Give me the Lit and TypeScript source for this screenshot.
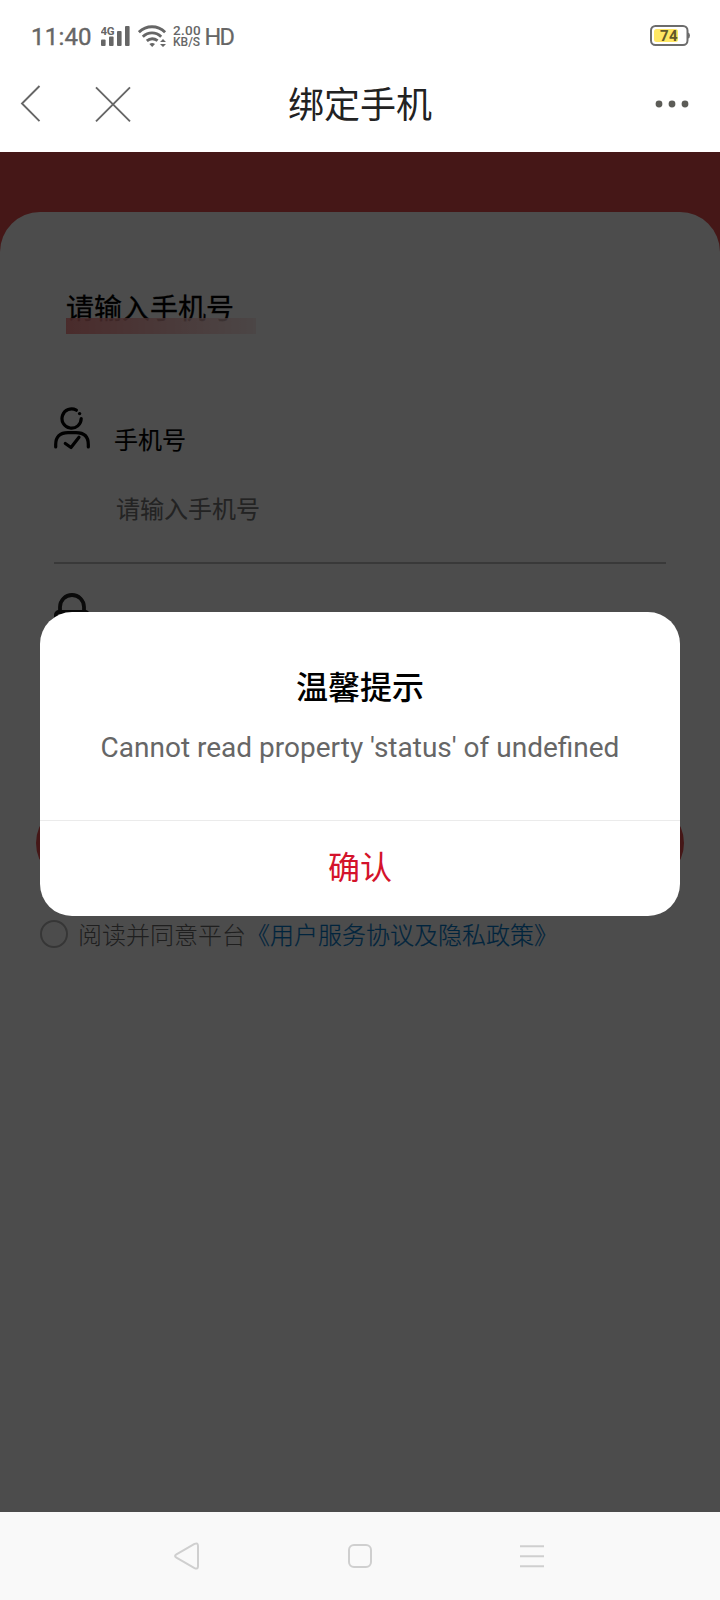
import { LitElement, html, css } from "lit";
import { customElement } from "lit/decorators.js";

@customElement("status-bar")
class StatusBar extends LitElement {
  static styles = css`
    :host { display: flex; box-sizing: border-box; height: 72px; padding: 0 30px 0 31px; align-items: center; color: #666; font-family: Roboto, "Noto Sans", sans-serif; }
    .time { width: 70px; font-size: 24px; line-height: 28px; font-weight: 400; -webkit-text-stroke: 0.4px #666; letter-spacing: 0.2px; white-space: nowrap; margin-top: 2px; }
    svg { display: block; flex: none; }
    .rate { width: 31.5px; font-size: 13.5px; line-height: 12px; font-weight: 500; white-space: nowrap; }
    .rate div { height: 12px; letter-spacing: 0.3px; }
    .rate .unit { font-size: 12px; letter-spacing: 0; }
    .hd { font-size: 23.5px; line-height: 28px; margin-top: 2px; letter-spacing: -1.8px; -webkit-text-stroke: 0.2px #666; }
    .battery { margin-left: auto; }
  `;
  render() {
    return html`
      <div class="time">11:40</div>
      <svg width="37" height="24" viewBox="0 0 37 24" fill="#666">
        <text x="-0.5" y="10.5" font-size="11.5" font-weight="700" letter-spacing="-0.3">4G</text>
        <rect x="0" y="15.5" width="4.6" height="6.5" rx="1" />
        <rect x="8" y="12.5" width="4.6" height="9.5" rx="1" />
        <rect x="16" y="7" width="4.6" height="15" rx="1" />
        <rect x="24" y="2" width="4.6" height="20" rx="1" />
      </svg>
      <svg width="35" height="24" viewBox="0 0 35 24" fill="none" stroke="#666" stroke-width="2.9">
        <path d="M.9 8.2C8.5 1 19.5 1 27.1 8.2" />
        <path d="M4.8 12.7C10.3 7.6 17.7 7.6 23.2 12.7" />
        <path d="M8.8 16.9C12 14.2 16.2 14.2 19.6 16.7" />
        <path d="M11.4 20Q14.2 18 17 20L14.2 23Z" fill="#666" stroke="none" />
        <path d="M22 18L25 15L28 18ZM22 20L25 23L28 20Z" fill="#666" stroke="none" />
      </svg>
      <div class="rate"><div>2.00</div><div class="unit">KB/S</div></div>
      <div class="hd">HD</div>
      <svg class="battery" width="40" height="22" viewBox="0 0 40 22">
        <rect x="1" y="1" width="36.5" height="19" rx="4.5" fill="#fff" stroke="#6c6c6c" stroke-width="2" />
        <path d="M38 7.5Q40 8 40 10.5T38 13.5Z" fill="#6c6c6c" />
        <rect x="4" y="4" width="24" height="13" rx="2.5" fill="#ffe763" />
        <text x="19" y="16" text-anchor="middle" font-size="15" font-weight="700" fill="#62592a" letter-spacing="0.4">74</text>
      </svg>
    `;
  }
}

@customElement("title-bar")
class TitleBar extends LitElement {
  static styles = css`
    :host { display: grid; grid-template-columns: 1fr auto 1fr; box-sizing: border-box; height: 80px; align-items: center; padding: 0 31px 16px 20px; }
    .left { display: flex; gap: 53.5px; align-items: center; }
    h1 { margin: -4px -5.5px 0 5.5px; font: 400 36px/44px "Noto Sans CJK SC", sans-serif; color: #222; }
    .more { justify-self: end; }
    svg { display: block; }
  `;
  render() {
    return html`
      <div class="left">
        <svg width="21" height="38" viewBox="0 0 21 38" fill="none" stroke="#666" stroke-width="1.9"><path d="M19.5 1L2 18.5L19.5 36.2" /></svg>
        <svg width="36" height="36" viewBox="0 0 36 36" fill="none" stroke="#666" stroke-width="1.9"><path d="M1 1.3L35 35.3M35 1.3L1 35.3" /></svg>
      </div>
      <h1>绑定手机</h1>
      <svg class="more" width="34" height="8" viewBox="0 0 34 8" fill="#5c5c57"><circle cx="4" cy="4" r="3.4" /><circle cx="17" cy="4" r="3.4" /><circle cx="30" cy="4" r="3.4" /></svg>
    `;
  }
}

@customElement("phone-form")
class PhoneForm extends LitElement {
  static styles = css`
    :host { display: block; box-sizing: border-box; height: 1300px; background: #fff; border-radius: 40px 40px 0 0; padding-top: 76px; font-family: "Noto Sans CJK SC", sans-serif; }
    .heading { width: 190px; height: 46px; margin-left: 66px; position: relative; font-size: 28px; line-height: 39px; color: #000; white-space: nowrap; -webkit-text-stroke: 0.3px #000; }
    .heading::after { content: ""; position: absolute; left: 0; bottom: 0; width: 190px; height: 16px; background: linear-gradient(90deg, rgba(245,128,128,.86), rgba(250,228,228,.78)); }
    .field { display: grid; grid-template-columns: 60px 1fr; margin: 73px 54px 0; height: 157px; border-bottom: 2px solid #bfbfbf; box-sizing: border-box; grid-template-rows: 68px 1fr; font-size: 24px; }
    .field svg { margin-top: 0; }
    .label { line-height: 36px; margin-top: 14px; color: #000; -webkit-text-stroke: 0.2px #000; }
    .placeholder { grid-column: 2; line-height: 36px; margin: 15px 0 0 2px; color: #757575; -webkit-text-stroke: 0.1px #757575; }
    .lock { display: block; margin: 29px 0 0 54px; }
    .submit { height: 80px; border-radius: 40px; margin: 166px 36px 0; background: #e64d4d; }
    .agree { display: flex; align-items: center; margin: 31px 0 0 40px; height: 40px; font-size: 24px; line-height: 36px; color: #686868; font-weight: 300; white-space: nowrap; }
    .radio { box-sizing: border-box; width: 28px; height: 28px; margin-right: 10px; border: 2px solid #b5b5b5; border-radius: 50%; }
    .link { color: #0078cc; -webkit-text-stroke: 0.2px #0078cc; }
  `;
  render() {
    return html`
      <div class="heading">请输入手机号</div>
      <div class="field">
        <svg width="38" height="44" viewBox="0 0 38 44" fill="none" stroke="#000" stroke-width="3.2" stroke-linecap="round" stroke-linejoin="round">
          <path d="M22.3 3.2A9.6 9.6 0 1 0 27.2 11.5" />
          <circle cx="25.6" cy="6.6" r="1.7" fill="#000" stroke="none" />
          <path d="M1.7 40V37.5Q1.7 25.7 14 25.7H22Q34.3 25.7 34.3 37.5V40" />
          <path d="M11.3 36.5L17 40.5L25 30.3" />
        </svg>
        <div class="label">手机号</div>
        <div class="placeholder">请输入手机号</div>
      </div>
      <svg class="lock" width="36" height="44" viewBox="0 0 36 44" fill="none" stroke="#222" stroke-width="3.8"><path d="M6 19V14A12 12 0 0 1 30 14V19" /><rect x="1.9" y="19" width="32.2" height="23" rx="3" /></svg>
      <div class="submit"></div>
      <div class="agree"><span class="radio"></span><span>阅读并同意平台</span><span class="link">《用户服务协议及隐私政策》</span></div>
    `;
  }
}

@customElement("alert-dialog")
class AlertDialog extends LitElement {
  static styles = css`
    :host { display: flex; flex-direction: column; width: 640px; height: 304px; background: #fff; border-radius: 32px; overflow: hidden; text-align: center; }
    .body { flex: 1; padding-top: 49px; }
    .title { font: 500 32px/48px "Noto Sans CJK SC", sans-serif; color: #000; }
    .message { margin-top: 19px; font: 400 28px/40px Roboto, sans-serif; color: #666; white-space: nowrap; }
    .confirm { height: 95px; border-top: 1px solid #ebebeb; font: 400 32px/88px "Noto Sans CJK SC", sans-serif; color: #d4132b; }
  `;
  render() {
    return html`
      <div class="body">
        <div class="title">温馨提示</div>
        <div class="message">Cannot read property 'status' of undefined</div>
      </div>
      <div class="confirm">确认</div>
    `;
  }
}

@customElement("nav-bar")
class NavBar extends LitElement {
  static styles = css`
    :host { display: flex; height: 88px; background: #f9f9f9; justify-content: center; align-items: center; gap: 146px; }
    svg { display: block; }
  `;
  render() {
    return html`
      <svg width="28" height="28" viewBox="0 0 28 28" fill="none" stroke="#cfcfcf" stroke-width="2"><path d="M2.4 12.4L20.5 1.9Q24 .4 24 3.9V24.2Q24 27.6 20.5 26.1L2.4 15.6Q-.3 14 2.4 12.4Z" /></svg>
      <svg width="24" height="24" viewBox="0 0 24 24" fill="none" stroke="#cfcfcf" stroke-width="2"><rect x="1" y="1" width="22" height="22" rx="5" /></svg>
      <svg width="28" height="24" viewBox="0 0 28 24" fill="none" stroke="#cfcfcf" stroke-width="2"><path d="M2 2.2H26M2 12.3H26M2 22.3H26" /></svg>
    `;
  }
}

@customElement("app-root")
class AppRoot extends LitElement {
  static styles = css`
    :host { display: flex; flex-direction: column; width: 720px; height: 1600px; background: #fff; overflow: hidden; }
    .page { position: relative; box-sizing: border-box; height: 1360px; padding-top: 60px; background: #e64d4d; }
    .mask { position: absolute; inset: 0; display: flex; align-items: flex-start; justify-content: center; padding-top: 460px; background: rgba(0, 0, 0, 0.7); }
  `;
  render() {
    return html`
      <status-bar></status-bar>
      <title-bar></title-bar>
      <div class="page">
        <phone-form></phone-form>
        <div class="mask"><alert-dialog></alert-dialog></div>
      </div>
      <nav-bar></nav-bar>
    `;
  }
}
